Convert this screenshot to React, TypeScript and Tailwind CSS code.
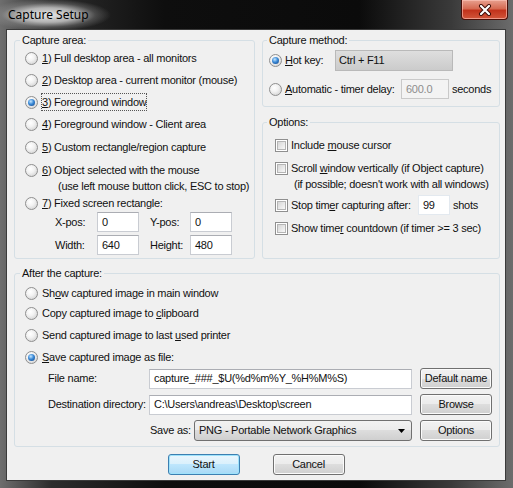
import type { ReactNode } from "react";

function Radio({ checked = false }: { checked?: boolean }) {
  return (
    <span className="flex h-[13px] w-[13px] shrink-0 items-center justify-center rounded-full border border-[#8f8f8f] bg-[radial-gradient(circle_at_40%_35%,#ffffff_0%,#f2f2f2_40%,#c8c8c8_100%)]">
      {checked && (
        <span className="h-[7px] w-[7px] rounded-full bg-[radial-gradient(circle_at_40%_35%,#c4e6ff_0%,#3a89d6_45%,#0d3c7e_100%)]" />
      )}
    </span>
  );
}

function Check() {
  return (
    <span className="flex h-[13px] w-[13px] shrink-0 items-center justify-center border border-[#8f8f8f] bg-white">
      <span className="h-[9px] w-[9px] border border-[#b5b5b5] bg-[linear-gradient(135deg,#d6d6d6,#f8f8f8)]" />
    </span>
  );
}

function Field({ value, className = "" }: { value: string; className?: string }) {
  return (
    <div
      className={`flex h-[20px] shrink-0 items-center border border-[#c9ccd2] border-t-[#abadb3] bg-white pl-[4px] ${className}`}
    >
      {value}
    </div>
  );
}

function Btn({
  children,
  focused = false,
  className = "",
}: {
  children: ReactNode;
  focused?: boolean;
  className?: string;
}) {
  return (
    <button
      type="button"
      className={`flex h-[21px] w-[72px] shrink-0 items-center justify-center rounded-[3px] border ${
        focused
          ? "border-[#3c7fb1] bg-[linear-gradient(#eaf6fd_0%,#d9f0fc_50%,#bee6fd_50%,#a7d9f5_100%)] shadow-[inset_0_0_0_1px_#9ee2fb]"
          : "border-[#707070] bg-[linear-gradient(#f2f2f2_0%,#ebebeb_50%,#dddddd_50%,#cfcfcf_100%)] shadow-[inset_0_0_0_1px_#fbfbfb]"
      } ${className}`}
    >
      {children}
    </button>
  );
}

function Group({
  title,
  legendClass,
  className = "",
  children,
}: {
  title: string;
  legendClass: string;
  className?: string;
  children: ReactNode;
}) {
  return (
    <fieldset className={`rounded-[3px] border border-[#d5dfe5] px-0 ${className}`}>
      <legend className={`px-[2px] leading-[13px] ${legendClass}`}>{title}</legend>
      {children}
    </fieldset>
  );
}

export default function App() {
  return (
    <div className="flex h-[488px] w-[513px] flex-col overflow-hidden bg-[linear-gradient(90deg,#6e6e6e_0%,#2c2c2c_10%,#0e0e0e_32%,#0b0b0b_70%,#3a3a3a_88%,#6c6c6c_100%)] font-['Liberation_Sans',Arial,sans-serif] text-[11px] tracking-[-0.25px] text-[#111]">
      {/* title bar */}
      <div className="flex h-[30px] shrink-0 items-start">
        <div className="flex h-[30px] flex-1 items-center">
          <span className="-ml-[14px] inline-block bg-[radial-gradient(closest-side,rgba(240,240,240,0.95)_0%,rgba(210,210,210,0.8)_45%,rgba(150,150,150,0.35)_75%,rgba(120,120,120,0)_100%)] px-[22px] py-[9px] font-['Noto_Sans',sans-serif] text-[12px] leading-[14px] tracking-normal text-black">
            Capture Setup
          </span>
        </div>
        <div className="mr-[5px] flex h-[20px] w-[47px] items-center justify-center rounded-b-[4px] border border-t-0 border-[#4a0f08] bg-[linear-gradient(#e8a08f_0%,#d66a52_45%,#c2331c_55%,#d2563b_100%)] shadow-[inset_0_0_0_1px_rgba(255,200,190,0.6)]">
          <svg width="14" height="12" viewBox="0 0 14 12">
            <path d="M3 2 L11 10 M11 2 L3 10" stroke="#3a0a05" strokeWidth="4" strokeLinecap="round" />
            <path d="M3 2 L11 10 M11 2 L3 10" stroke="#ffffff" strokeWidth="2.2" strokeLinecap="round" />
          </svg>
        </div>
      </div>

      {/* client area */}
      <div className="mb-[8px] ml-[7px] mr-[8px] flex flex-1 flex-col bg-[#f0f0f0] pt-[4px] pl-[7px] shadow-[0_0_0_1px_#3a3a3a]">
        <div className="flex gap-[7px]">
          {/* capture area */}
          <Group title="Capture area:" legendClass="ml-[5px]" className="h-[225px] w-[241px]">
            <div className="flex flex-col pl-[10px]">
              <div className="flex h-[22px] items-center gap-[4px]">
                <Radio />
                <span><u>1</u>) Full desktop area - all monitors</span>
              </div>
              <div className="flex h-[22px] items-center gap-[4px]">
                <Radio />
                <span><u>2</u>) Desktop area - current monitor (mouse)</span>
              </div>
              <div className="flex h-[22px] items-center gap-[4px]">
                <Radio checked />
                <span className="outline-1 outline-dotted outline-[#555]"><u>3</u>) Foreground window</span>
              </div>
              <div className="flex h-[23px] items-center gap-[4px]">
                <Radio />
                <span><u>4</u>) Foreground window - Client area</span>
              </div>
              <div className="flex h-[23px] items-center gap-[4px]">
                <Radio />
                <span><u>5</u>) Custom rectangle/region capture</span>
              </div>
              <div className="mt-[3px] flex items-start gap-[4px] leading-[16px]">
                <span className="mt-[1.5px]">
                  <Radio />
                </span>
                <div className="flex flex-col">
                  <span><u>6</u>) Object selected with the mouse</span>
                  <span className="pl-[16px]">(use left mouse button click, ESC to stop)</span>
                </div>
              </div>
              <div className="flex h-[18px] items-center gap-[4px]">
                <Radio />
                <span><u>7</u>) Fixed screen rectangle:</span>
              </div>
              <div className="flex h-[20px] items-center pl-[30px]">
                <span className="w-[42px]">X-pos:</span>
                <Field value="0" className="w-[42px]" />
                <span className="ml-[11px] w-[40px]">Y-pos:</span>
                <Field value="0" className="w-[42px]" />
              </div>
              <div className="mt-[3px] flex h-[20px] items-center pl-[30px]">
                <span className="w-[42px]">Width:</span>
                <Field value="640" className="w-[42px]" />
                <span className="ml-[11px] w-[40px]">Height:</span>
                <Field value="480" className="w-[42px]" />
              </div>
            </div>
          </Group>

          <div className="flex w-[238px] flex-col">
            {/* capture method */}
            <Group title="Capture method:" legendClass="ml-[4px]" className="h-[73px]">
              <div className="flex flex-col pl-[6px]">
                <div className="mt-[3px] flex h-[21px] items-center gap-[3px]">
                  <Radio checked />
                  <span className="w-[47px]"><u>H</u>ot key:</span>
                  <div className="flex h-[21px] w-[118px] items-center border border-[#b9b9b9] bg-[linear-gradient(#dedede,#cbcbcb)] pl-[3px]">
                    Ctrl + F11
                  </div>
                </div>
                <div className="mt-[8px] flex h-[20px] items-center gap-[3px]">
                  <Radio />
                  <span className="w-[113px]"><u>A</u>utomatic - timer delay:</span>
                  <div className="flex h-[20px] w-[48px] items-center border border-[#c9c9c9] bg-[#f3f3f3] pl-[4px] text-[#8d8d8d]">
                    600.0
                  </div>
                  <span>seconds</span>
                </div>
              </div>
            </Group>

            {/* options */}
            <Group title="Options:" legendClass="ml-[4px]" className="mt-[9px] h-[143px]">
              <div className="flex flex-col pl-[12px]">
                <div className="mt-[6px] flex h-[20px] items-center gap-[3px]">
                  <Check />
                  <span>Include <u>m</u>ouse cursor</span>
                </div>
                <div className="mt-[5px] flex items-start gap-[3px] leading-[16px]">
                  <span className="mt-[1.5px]">
                    <Check />
                  </span>
                  <div className="flex flex-col">
                    <span>Scroll <u>w</u>indow vertically (if Object capture)</span>
                    <span className="pl-[3px]">(if possible; doesn't work with all windows)</span>
                  </div>
                </div>
                <div className="mt-[3px] flex h-[20px] items-center gap-[3px]">
                  <Check />
                  <span className="w-[124px]">Stop tim<u>e</u>r capturing after:</span>
                  <Field value="99" className="w-[32px] border-[#e3e9ef] border-t-[#e3e9ef]" />
                  <span>shots</span>
                </div>
                <div className="mt-[3px] flex h-[20px] items-center gap-[3px]">
                  <Check />
                  <span>Show time<u>r</u> countdown (if timer &gt;= 3 sec)</span>
                </div>
              </div>
            </Group>
          </div>
        </div>

        {/* after the capture */}
        <Group title="After the capture:" legendClass="ml-[5px]" className="mt-[8px] h-[180px] w-[486px]">
          <div className="flex flex-col pl-[10px]">
            <div className="mt-[3px] flex h-[20px] items-center gap-[4px]">
              <Radio />
              <span>Sh<u>o</u>w captured image in main window</span>
            </div>
            <div className="flex h-[21px] items-center gap-[4px]">
              <Radio />
              <span>Copy captured image to <u>c</u>lipboard</span>
            </div>
            <div className="flex h-[22px] items-center gap-[4px]">
              <Radio />
              <span>Send captured image to last <u>u</u>sed printer</span>
            </div>
            <div className="flex h-[22px] items-center gap-[4px]">
              <Radio checked />
              <span><u>S</u>ave captured image as file:</span>
            </div>
            <div className="flex h-[21px] items-center">
              <span className="w-[124px] pl-[23px]">File name:</span>
              <Field value="capture_###_$U(%d%m%Y_%H%M%S)" className="w-[263px]" />
              <Btn className="ml-[8px]">Default name</Btn>
            </div>
            <div className="mt-[5px] flex h-[21px] items-center">
              <span className="w-[124px] pl-[23px]">Destination directory:</span>
              <Field value="C:\Users\andreas\Desktop\screen" className="w-[263px]" />
              <Btn className="ml-[8px]">Browse</Btn>
            </div>
            <div className="mt-[5px] flex h-[21px] items-center">
              <span className="w-[125px]" />
              <span className="w-[44px]">Save as:</span>
              <div className="flex h-[21px] w-[218px] items-center justify-between rounded-[3px] border border-[#707070] bg-[linear-gradient(#f2f2f2_0%,#ebebeb_50%,#dddddd_50%,#cfcfcf_100%)] pr-[6px] pl-[4px]">
                <span>PNG - Portable Network Graphics</span>
                <svg width="7" height="4" viewBox="0 0 7 4">
                  <path d="M0 0 H7 L3.5 4 Z" fill="#000" />
                </svg>
              </div>
              <Btn className="ml-[8px]">Options</Btn>
            </div>
          </div>
        </Group>

        <div className="mt-[7px] flex justify-center gap-[33px] pr-[7px]">
          <Btn focused>Start</Btn>
          <Btn>Cancel</Btn>
        </div>
      </div>
    </div>
  );
}
